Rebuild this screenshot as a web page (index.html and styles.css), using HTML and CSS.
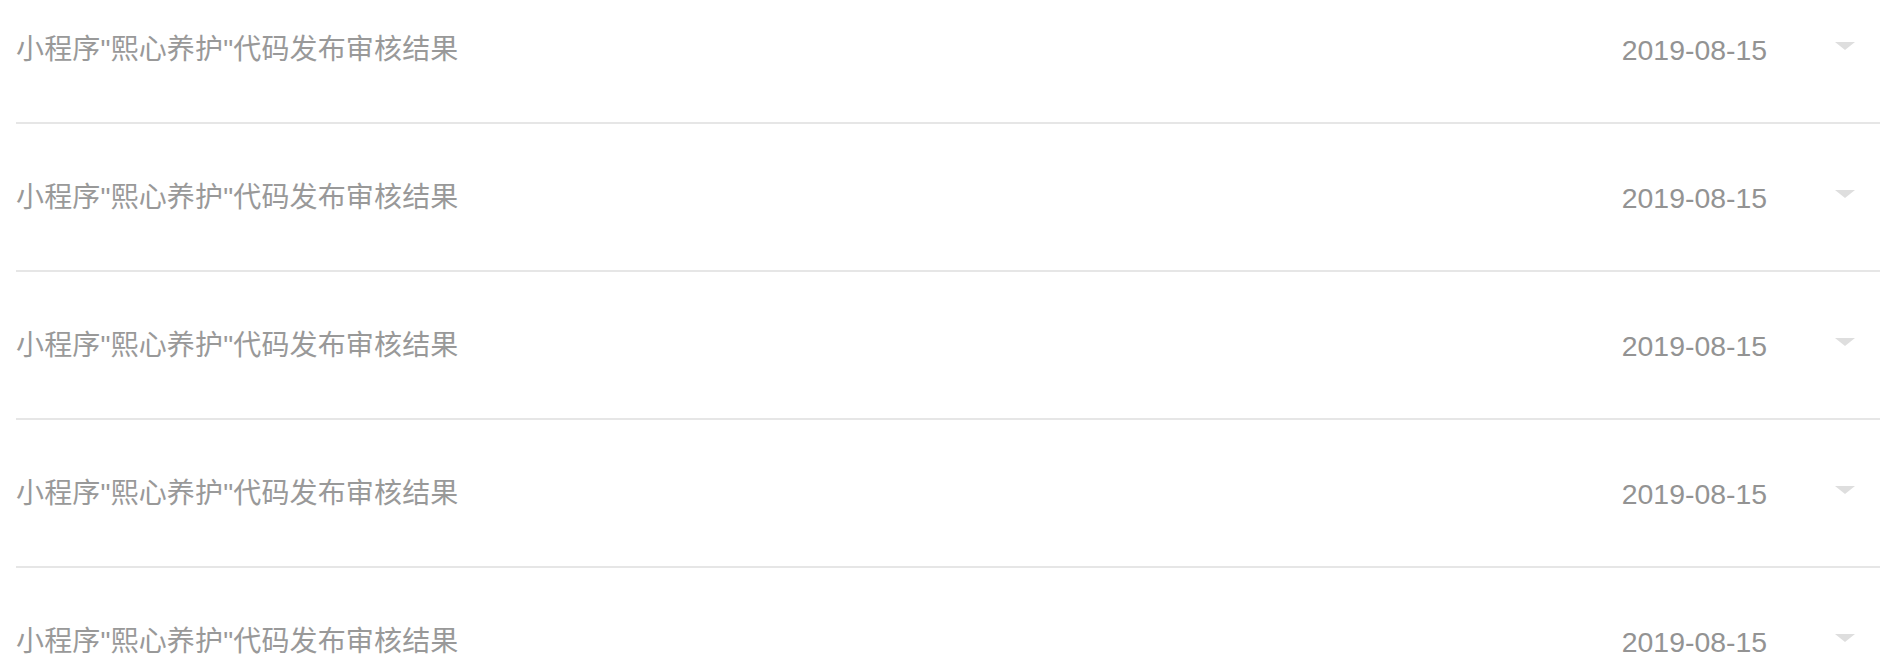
FILE: index.html
```html
<!DOCTYPE html>
<html lang="zh-CN">
<head>
<meta charset="utf-8">
<title>消息列表</title>
<link rel="stylesheet" href="styles.css">
</head>
<body>
<ul class="list">
  <li class="row"><span class="title">小程序"熙心养护"代码发布审核结果</span><span class="date">2019-08-15</span><span class="arrow"></span></li>
  <li class="row"><span class="title">小程序"熙心养护"代码发布审核结果</span><span class="date">2019-08-15</span><span class="arrow"></span></li>
  <li class="row"><span class="title">小程序"熙心养护"代码发布审核结果</span><span class="date">2019-08-15</span><span class="arrow"></span></li>
  <li class="row"><span class="title">小程序"熙心养护"代码发布审核结果</span><span class="date">2019-08-15</span><span class="arrow"></span></li>
  <li class="row"><span class="title">小程序"熙心养护"代码发布审核结果</span><span class="date">2019-08-15</span><span class="arrow"></span></li>
</ul>
</body>
</html>
```
FILE: styles.css
```css
html, body {
  margin: 0;
  padding: 0;
  background: #fff;
  overflow: hidden;
}
.list {
  list-style: none;
  margin: -24px 6px 0 16px;
  padding: 0;
}
.row {
  display: flex;
  align-items: center;
  height: 146px;
  border-bottom: 2px solid #e6e6e6;
  font-family: "Liberation Sans", "Noto Sans CJK SC", sans-serif;
  color: #999;
}
.title {
  flex: 1;
  font-size: 28px;
  line-height: 1;
  letter-spacing: 0.15px;
  padding-top: 2px;
}
.date {
  font-size: 28.4px;
  line-height: 1;
  margin-right: 68px;
  color: #939393;
  padding-top: 2px;
}
.arrow {
  width: 0;
  height: 0;
  border-left: 10px solid transparent;
  border-right: 10px solid transparent;
  border-top: 8px solid #dedede;
  margin-right: 25px;
  margin-top: -6px;
}
```
